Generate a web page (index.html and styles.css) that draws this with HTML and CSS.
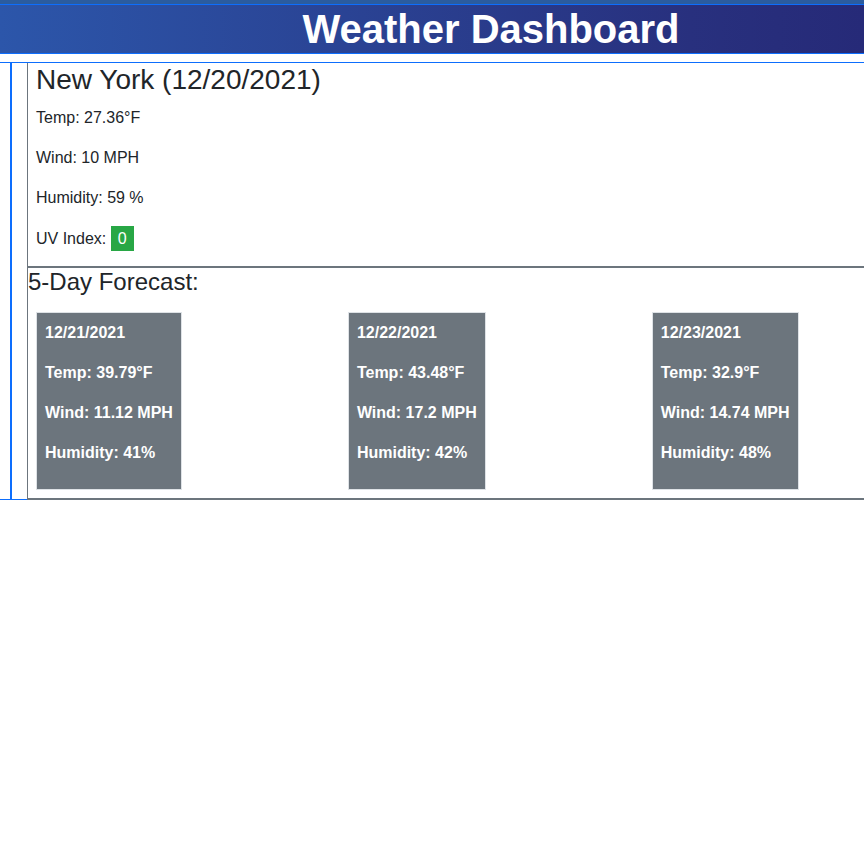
FILE: index.html
```html
<!DOCTYPE html>
<html lang="en">
<head>
<meta charset="utf-8">
<title>Weather Dashboard</title>
<link rel="stylesheet" href="styles.css">
</head>
<body>
<div class="topband"></div>
<header class="header">
  <h1 class="title">Weather Dashboard</h1>
</header>
<main class="main">
  <div class="aside"><div class="aside-line"></div></div>
  <div class="content">
    <section class="current">
      <h2 class="city">New York (12/20/2021)</h2>
      <p>Temp: 27.36°F</p>
      <p>Wind: 10 MPH</p>
      <p>Humidity: 59 %</p>
      <p class="last">UV Index: <span class="uv">0</span></p>
    </section>
    <section class="forecast">
      <h4 class="forecast-title">5-Day Forecast:</h4>
      <div class="cards">
        <div class="card">
          <p>12/21/2021</p>
          <p>Temp: 39.79°F</p>
          <p>Wind: 11.12 MPH</p>
          <p>Humidity: 41%</p>
        </div>
        <div class="card">
          <p>12/22/2021</p>
          <p>Temp: 43.48°F</p>
          <p>Wind: 17.2 MPH</p>
          <p>Humidity: 42%</p>
        </div>
        <div class="card">
          <p>12/23/2021</p>
          <p>Temp: 32.9°F</p>
          <p>Wind: 14.74 MPH</p>
          <p>Humidity: 48%</p>
        </div>
      </div>
    </section>
  </div>
</main>
</body>
</html>
```

FILE: styles.css
```css
* { box-sizing: border-box; }
html, body { margin: 0; padding: 0; overflow: hidden; }
body {
  font-family: "Liberation Sans", Arial, sans-serif;
  font-size: 16px;
  line-height: 24px;
  color: #212529;
  background: #fff;
}
.topband {
  height: 4px;
  background: #2b5c9f;
}
.header {
  border-top: 1px solid #0d6efd;
  border-bottom: 1px solid #0d6efd;
  background: linear-gradient(to right, #2c56aa, #28307e 80%, #262a78);
  padding-left: 118px;
  text-align: center;
}
.title {
  margin: 0;
  font-size: 40px;
  line-height: 48px;
  font-weight: 700;
  color: #fff;
}
.main {
  margin-top: 8px;
  border-top: 1px solid #0d6efd;
  display: flex;
}
.aside {
  width: 27px;
  flex: none;
  border-bottom: 1px solid #0d6efd;
  display: flex;
}
.aside-line {
  margin-left: 10px;
  border-left: 2px solid #0d6efd;
}
.content {
  flex: 1;
  min-width: 0;
  border-left: 1px solid #6c757d;
  border-bottom: 2px solid #6c757d;
}
.current {
  padding: 0 9px 0 8px;
  border-bottom: 2px solid #6c757d;
}
.city {
  margin: 0 0 9px;
  font-size: 28px;
  line-height: 34px;
  font-weight: 400;
}
p { margin: 0 0 16px; }
.current .last { margin-bottom: 15px; }
.uv {
  display: inline-block;
  background: #28a745;
  color: #fff;
  padding: 0 7px;
  line-height: 25px;
}
.forecast-title {
  margin: 0 0 8px;
  font-size: 24px;
  line-height: 1.2;
  font-weight: 400;
}
.cards {
  display: flex;
  align-items: flex-start;
  gap: 166px;
  padding: 7px 0 8px 8px;
  overflow: hidden;
}
.card {
  flex: none;
  background: #6c757d;
  border: 1px solid #dee2e6;
  color: #fff;
  font-weight: 700;
  padding: 8px 8px 8px;
}
```
